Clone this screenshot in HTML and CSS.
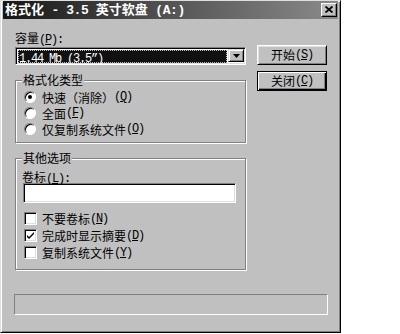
FILE: index.html
```html
<!DOCTYPE html>
<html>
<head>
<meta charset="utf-8">
<link rel="stylesheet" href="styles.css">
</head>
<body>
<div class="window">
  <div class="titlebar">
    <span class="title">格式化<span class="lt"> - 3.5 </span>英寸软盘<span class="lt"> (A:)</span></span>
    <span class="xbtn"><svg width="8" height="7" viewBox="0 0 8 7"><path d="M0.5 0.5L7.5 6.5M7.5 0.5L0.5 6.5" stroke="#000" stroke-width="1.8" fill="none"/></svg></span>
  </div>
  <div class="content">
    <div class="main">
      <div class="leftcol">
        <div class="lbl">容量<span class="l">(<u>P</u>):</span></div>
        <div class="combo">
          <div class="sel"><span class="l">1.44 Mb (3.5”)</span></div>
          <div class="drop"><svg width="7" height="4" viewBox="0 0 7 4"><path d="M0 0h7L3.5 4z" fill="#000"/></svg></div>
        </div>
        <div class="group g1">
          <span class="legend">格式化类型</span>
          <div class="opt"><span class="radio on"></span>快速（消除）<span class="l">(<u>Q</u>)</span></div>
          <div class="opt"><span class="radio"></span>全面<span class="l">(<u>F</u>)</span></div>
          <div class="opt"><span class="radio"></span>仅复制系统文件<span class="l">(<u>O</u>)</span></div>
        </div>
        <div class="group g2">
          <span class="legend">其他选项</span>
          <div class="vlbl">卷标<span class="l">(<u>L</u>):</span></div>
          <div class="textbox"></div>
          <div class="checks">
            <div class="chk-row"><span class="chk"></span>不要卷标<span class="l">(<u>N</u>)</span></div>
            <div class="chk-row"><span class="chk"><svg width="7" height="7" viewBox="0 0 7 7"><path d="M0 3l2 2 5-5v2l-5 5-2-2z" fill="#000"/></svg></span>完成时显示摘要<span class="l">(<u>D</u>)</span></div>
            <div class="chk-row"><span class="chk"></span>复制系统文件<span class="l">(<u>Y</u>)</span></div>
          </div>
        </div>
      </div>
      <div class="buttons">
        <div class="btn">开始<span class="l">(<u>S</u>)</span></div>
        <div class="btn def">关闭<span class="l">(<u>C</u>)</span></div>
      </div>
    </div>
    <div class="progress"></div>
  </div>
</div>
</body>
</html>
```
FILE: styles.css
```css
* { box-sizing: border-box; }
body {
  margin: 0;
  background: #fff;
  font-family: "Noto Sans CJK SC", sans-serif;
  font-size: 12px;
  color: #000;
}
.window {
  width: 341px;
  height: 333px;
  background: #c0c0c0;
  border: 1px solid;
  border-color: #dfdfdf #000 #000 #dfdfdf;
  box-shadow: inset 1px 1px 0 #fff, inset -1px -1px 0 #808080;
  padding: 0 2px 2px 2px;
  display: flex;
  flex-direction: column;
}
.titlebar {
  height: 18px;
  background: linear-gradient(to right, #161616, #5a5a5a 55%, #8a8a8a);
  display: flex;
  align-items: center;
  justify-content: space-between;
  padding-left: 2px;
}
.title {
  color: #fff;
  font-weight: bold;
  font-size: 13px;
  line-height: 18px;
  white-space: pre;
}
.lt {
  font-family: "Liberation Mono", monospace;
  font-size: 13px;
  letter-spacing: -0.4px;
  font-weight: bold;
}
.xbtn {
  width: 16px;
  height: 14px;
  margin-right: 1px;
  background: #c0c0c0;
  border: 1px solid;
  border-color: #fff #000 #000 #fff;
  box-shadow: inset -1px -1px 0 #808080;
  display: flex;
  align-items: center;
  justify-content: center;
}
.xbtn svg { display: block; margin-top: -1px; }
.content {
  padding: 12px 0 0 12px;
  display: flex;
  flex-direction: column;
}
.main { display: flex; }
.leftcol {
  width: 231px;
  display: flex;
  flex-direction: column;
}
.l {
  font-family: "Liberation Mono", monospace;
  font-size: 12px;
  letter-spacing: -1.2px;
  white-space: pre;
}
.lbl { height: 14px; line-height: 14px; }
.combo {
  margin-top: 2px;
  height: 18px;
  background: #fff;
  border: 1px solid;
  border-color: #808080 #fff #fff #808080;
  box-shadow: inset 1px 1px 0 #000, inset -1px -1px 0 #dfdfdf;
  padding: 2px 1px 1px 2px;
  display: flex;
}
.sel {
  flex: 1;
  background: #111;
  color: #fff;
  outline: 1px dotted #bbb;
  outline-offset: -1px;
  margin-right: 1px;
  line-height: 13px;
  padding-left: 1px;
}
.drop {
  width: 16px;
  height: 13px;
  margin-top: -1px;
  background: #c0c0c0;
  border: 1px solid;
  border-color: #dfdfdf #000 #000 #dfdfdf;
  box-shadow: inset 1px 1px 0 #fff, inset -1px -1px 0 #808080;
  display: flex;
  align-items: center;
  justify-content: center;
}
.drop svg { display: block; }
.group {
  position: relative;
  border: 1px solid #808080;
  box-shadow: 1px 1px 0 #fff, inset 1px 1px 0 #fff;
  margin-top: 15px;
}
.legend {
  position: absolute;
  top: -8px;
  left: 6px;
  padding: 0 1px;
  background: #c0c0c0;
  line-height: 14px;
}
.g1 { padding: 8px 0 5px 8px; }
.opt {
  height: 16px;
  display: flex;
  align-items: center;
  white-space: nowrap;
}
.radio {
  width: 12px;
  height: 12px;
  border-radius: 50%;
  background: #fff;
  border: 1px solid;
  border-color: #808080 #fff #fff #808080;
  box-shadow: inset 1px 1px 0 #000;
  margin-right: 6px;
  position: relative;
  flex: none;
}
.radio.on::after {
  content: "";
  position: absolute;
  left: 3px;
  top: 3px;
  width: 4px;
  height: 4px;
  border-radius: 50%;
  background: #000;
}
.g2 { padding: 11px 0 8px 0; }
.vlbl { height: 13px; line-height: 13px; padding-left: 6px; }
.textbox {
  margin-left: 7px;
  width: 213px;
  height: 20px;
  background: #fff;
  border: 1px solid;
  border-color: #808080 #fff #fff #808080;
  box-shadow: inset 1px 1px 0 #000, inset -1px -1px 0 #dfdfdf;
}
.checks { margin-top: 7px; padding-left: 8px; }
.chk-row {
  height: 17px;
  display: flex;
  align-items: center;
  white-space: nowrap;
}
.chk {
  width: 13px;
  height: 13px;
  background: #fff;
  border: 1px solid;
  border-color: #808080 #fff #fff #808080;
  box-shadow: inset 1px 1px 0 #000, inset -1px -1px 0 #dfdfdf;
  margin-right: 5px;
  display: flex;
  align-items: center;
  justify-content: center;
  flex: none;
}
.chk svg { display: block; }
.buttons {
  margin-left: 11px;
  margin-top: 14px;
  display: flex;
  flex-direction: column;
  gap: 6px;
}
.btn {
  width: 70px;
  height: 20px;
  border: 1px solid;
  border-color: #fff #000 #000 #fff;
  box-shadow: inset 1px 1px 0 #dfdfdf, inset -1px -1px 0 #808080;
  display: flex;
  align-items: center;
  justify-content: center;
  line-height: 14px;
}
.btn.def {
  border: 1px solid #000;
  box-shadow: inset 1px 1px 0 #fff, inset -1px -1px 0 #000, inset -2px -2px 0 #808080;
}
.progress {
  margin-top: 24px;
  margin-left: -1px;
  width: 314px;
  height: 21px;
  border: 1px solid;
  border-color: #808080 #fff #fff #808080;
}
```
